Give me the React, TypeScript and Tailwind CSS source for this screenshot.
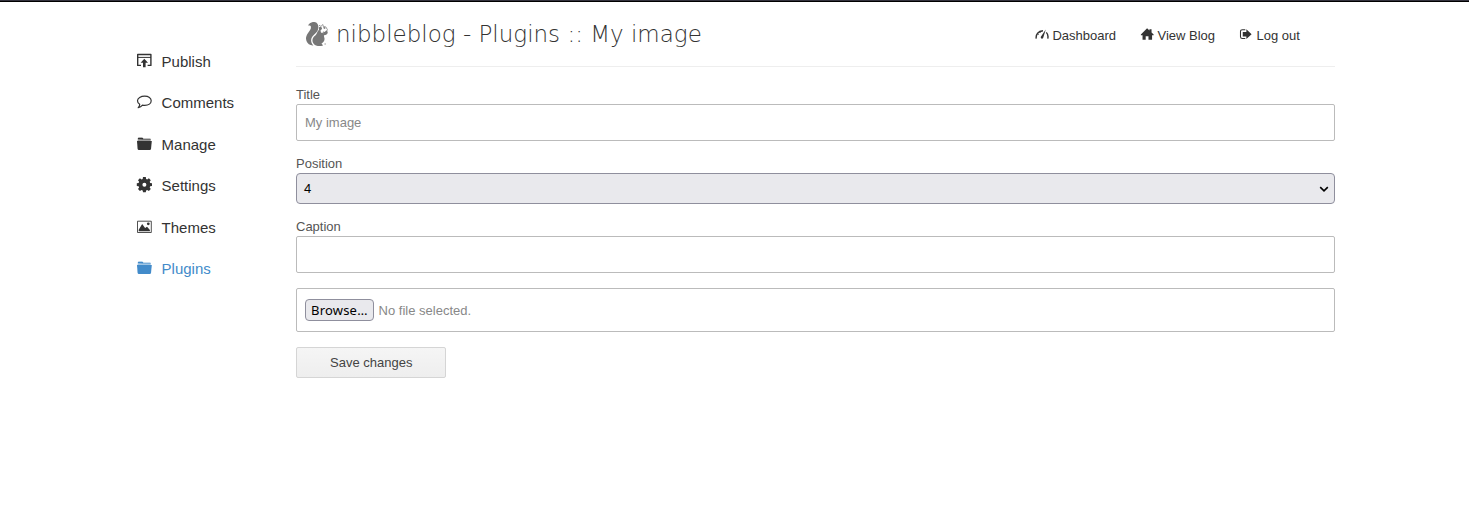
import type { ReactNode } from "react";

type IconProps = { children: ReactNode; className?: string };

function Icon({ children, className = "h-4 w-4" }: IconProps) {
  return (
    <svg viewBox="0 0 16 16" className={className} fill="currentColor" aria-hidden="true">
      {children}
    </svg>
  );
}

const publishIcon = (
  <>
    <path d="M5 12.400H1.700V1.500h13.200v10.900h-3.300" fill="none" stroke="currentColor" strokeWidth="1.400" strokeLinejoin="round" />
    <path d="M1.500 3.900h13.500v1H1.500z" />
    <path d="M8.300 5.800l3.700 3.900H9.600v4.600H7V9.700H4.600z" />
  </>
);
const commentIcon = (
  <path
    d="M8.700 2.200c3.900 0 6.500 1.900 6.500 4.500s-2.600 4.600-6.500 4.600c-.8 0-1.500-.1-2.200-.2-1 1.300-2.300 2.200-4.300 2.500 1.100-.9 1.600-2 1.500-3.400C2.300 9.400 1.500 8.200 1.500 6.700c0-2.600 3.300-4.500 7.200-4.500z"
    fill="none"
    stroke="currentColor"
    strokeWidth="1.200"
    strokeLinejoin="round"
  />
);
const folderIcon = (
  <>
    <path d="M1.900 3.600V2.300q0-.6.600-.6h3.900l.9.800h6.800q.6 0 .6.600v.7z" opacity=".6" />
    <path d="M1.900 3.300V2.300q0-.6.600-.6h3.900l.9.800-.6 1z" />
    <path d="M6.500 3h8.200v2.100H1.600V3.700h4.900z" opacity=".5" />
    <path d="M1 4.900h14.800l-.8 8.200q-.1.800-.9.800H2.500q-.8 0-.9-.8z" />
  </>
);
const gearIcon = (
  <path
    fillRule="evenodd"
    d="M7 0h2.800l.3 1.900 1.100.5 1.700-1.200 1.900 2-1.100 1.600.5 1.200 1.800.3v2.700l-1.800.3-.5 1.200 1.100 1.600-1.900 2-1.700-1.200-1.100.5-.3 1.900H7l-.3-1.900-1.100-.5-1.700 1.200-1.900-2 1.100-1.600-.5-1.200L.8 9V6.300L2.600 6l.5-1.200L2 3.200l1.900-2 1.700 1.200 1.100-.5zM8.400 5.700a2 2 0 1 0 0 4 2 2 0 0 0 0-4z"
  />
);
const pictureIcon = (
  <>
    <path d="M1.500 2.200h13.800v11.300H1.500z" fill="none" stroke="currentColor" strokeWidth="1" opacity=".85" />
    <path d="M2.700 12.300v-1.500L6.200 5l2.900 4 1.900-1.300 2.900 3.400v1.200z" />
    <circle cx="12.300" cy="4.800" r="1.400" />
  </>
);

const navItems = [
  { label: "Publish", icon: publishIcon },
  { label: "Comments", icon: commentIcon },
  { label: "Manage", icon: folderIcon },
  { label: "Settings", icon: gearIcon },
  { label: "Themes", icon: pictureIcon },
  { label: "Plugins", icon: folderIcon, active: true },
];

function Sidebar() {
  return (
    <nav className="w-[159px] shrink-0 pt-[39.3px] text-[15px]">
      {navItems.map((item) => (
        <a
          key={item.label}
          className={`flex h-[41.45px] items-center gap-[9.6px] ${item.active ? "text-[#428bca]" : "text-[#333]"}`}
        >
          <Icon className="mb-[2px] h-4 w-4">{item.icon}</Icon>
          <span>{item.label}</span>
        </a>
      ))}
    </nav>
  );
}

function Squirrel() {
  return (
    <svg viewBox="0 0 24 26" className="h-[26px] w-6 text-[#777]" fill="currentColor" aria-hidden="true">
      <path d="M9.200 2C6.500 1.900 3.400 3.600 3.300 5.700c1.200-.5 2.300-.2 2.600.8.700 2.300-1.700 4.600-3.200 7C1.600 15.300.9 17 1 18.800c.3 3.300 2 5.400 4.700 6.300.9.300 2 .5 2.700.3-2-1.800-2.700-4.100-2.100-6.600.8-3.400 5-5.100 6.500-8.600C14.300 6.700 13 2.200 9.200 2z" />
      <path d="M14.400 9.800c-2.600 1.400-1.900 4-4.100 5.800-2.600 2-3.500 4.400-2.400 6.900.6 1.500 1.900 2.600 3.900 3.200 1.600.4 3.800.2 5.900 0 .4-1-.6-1.600-1.300-2 1.800-1.100 3.400-3 3.100-5.200-.2-1.400-.9-2.300-.4-3.200 1.900 0 3.400-.9 3.600-2.500.1-1.200-.6-2-1.500-2.300l-1.500 1.600-1.500-.5-1.300 1.400z" />
      <path d="M14 5.200l1.900 1.200 2-1.900.4 2 2.500.4 1.600 2.700-.8 2" fill="none" stroke="currentColor" strokeWidth=".9" opacity=".8" />
      <path d="M13.900 7.300l2.300-.5.900 1.700-1.500 2.200-1.600-.5z" />
      <path d="M18 7.400l1.700-.3.900 1.200-1.400.8z" />
      <path d="M15.900 12.200l2.600.6" fill="none" stroke="#fff" strokeWidth=".6" />
      <path d="M19.500 23.300h1.300v1.400h-1.300z" opacity=".6" />
    </svg>
  );
}

function Header() {
  return (
    <header className="flex h-[65px] justify-between border-b border-[#eee]">
      <h1 className="flex pt-[18px] pl-[9px] font-['DejaVu_Sans',sans-serif] text-[23px] leading-7 font-extralight whitespace-nowrap text-[#333]">
        <Squirrel />
        <span className="ml-[7px]">nibbleblog - Plugins :: My image</span>
      </h1>
      <nav className="flex gap-6 pt-[24px] pr-[35.2px] text-[13px] leading-5 text-[#333]">
        <a className="flex">
          <Icon className="mt-0.5 mr-[3.4px] h-3.5 w-3.5">
            <path d="M1.400 12.100C.7 7.300 3.800 3.600 9.100 3.200M12.900 5c1.700 1.700 2.300 4.400 1.700 7.100" fill="none" stroke="currentColor" strokeWidth="1.600" />
            <path d="M12.300 1.700L9.300 11.300q-.7 1.300-2 .8-1.200-.7-.6-2z" />
            <path d="M2.900 6.700l1.500 1M5.500 4.100l.8 1.500" stroke="currentColor" strokeWidth=".8" />
          </Icon>
          <span>Dashboard</span>
        </a>
        <a className="flex">
          <Icon className="mt-0.5 mr-[3.4px] h-3.5 w-3.5">
            <path d="M8.100.3l2.700 2.500V1.500h2.400v3.500l2.400 2.300v1h-1.800v5.200H9.700V9.300H6.500v4.200H2.900V8.300H1v-1z" />
          </Icon>
          <span>View Blog</span>
        </a>
        <a className="flex">
          <Icon className="mt-0.5 mr-[3.4px] h-3.5 w-3.5">
            <path d="M7.200 2H3.900Q1.700 2 1.700 4.100v5.800q0 2.100 2.200 2.100h3.300" fill="none" stroke="currentColor" strokeWidth="1.200" />
            <path d="M8.400 1.300l6 5.700-6 5.700V9.600H4.300V4.500h4.100z" />
          </Icon>
          <span>Log out</span>
        </a>
      </nav>
    </header>
  );
}

const inputClass = "block w-full rounded-[2px] border border-[#bbb] bg-white px-2 text-[13px] text-[#888] outline-none";

export default function App() {
  return (
    <div className="min-h-[507px] bg-white font-['Liberation_Sans',Arial,sans-serif]">
      <div className="h-0.5 border-t border-[#34333e] bg-black" />
      <div className="flex pl-[136px]">
        <Sidebar />
        <main className="ml-px w-[1039px]">
          <Header />
          <form className="pt-[18px] text-[13px] leading-[19px] text-[#555]">
            <label className="block">
              Title
              <input className={`${inputClass} h-[37px]`} defaultValue="My image" />
            </label>
            <label className="mt-[13px] block">
              Position
              <span className="flex h-[31px] items-center justify-between rounded-[4px] border border-[#8f8f9d] bg-[#e9e9ed] pr-[5px] pl-[7px] text-black">
                <span>4</span>
                <svg viewBox="0 0 10 8" className="h-2 w-2.5" fill="none" stroke="#000" strokeWidth="1.600" aria-hidden="true">
                  <path d="M1.200 2.100l3.800 3.700 3.800-3.700" />
                </svg>
              </span>
            </label>
            <label className="mt-[13px] block">
              Caption
              <input className={`${inputClass} h-[37px]`} />
            </label>
            <div className={`${inputClass} mt-[15px] h-11`}>
              <div className="flex h-full items-center">
                <button type="button" className="h-[22px] w-[69px] rounded-[4px] border border-[#8f8f9d] bg-[#e9e9ed] pl-[5px] text-left font-['Noto_Sans',sans-serif] text-[13px] leading-5 tracking-[0.2px] whitespace-nowrap text-black">
                  Browse…
                </button>
                <span className="ml-[4.6px]">No file selected.</span>
              </div>
            </div>
            <button type="button" className="mt-[15px] h-[31px] w-[150px] rounded-[2px] border border-[#d5d5d5] bg-linear-to-b from-[#f5f5f5] to-[#eee] pl-[0.5px] text-[#444]">
              Save changes
            </button>
          </form>
        </main>
      </div>
    </div>
  );
}
